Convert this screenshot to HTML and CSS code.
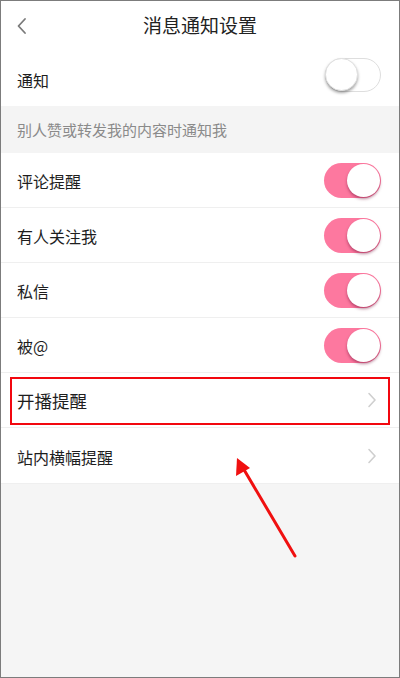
FILE: index.html
```html
<!DOCTYPE html>
<html lang="zh-CN">
<head>
<meta charset="utf-8">
<title>消息通知设置</title>
<link rel="stylesheet" href="styles.css">
</head>
<body>
<div class="frame">
  <header class="header">
    <svg class="back" width="12" height="18" viewBox="0 0 12 18"><path d="M9 2 L2.5 9 L9 16" fill="none" stroke="#7a7a7a" stroke-width="1.8" stroke-linecap="round" stroke-linejoin="round"/></svg>
    <h1 class="title">消息通知设置</h1>
  </header>
  <div class="row row-main">
    <span class="label">通知</span>
    <span class="toggle off"><span class="knob"></span></span>
  </div>
  <div class="section">别人赞或转发我的内容时通知我</div>
  <div class="row">
    <span class="label">评论提醒</span>
    <span class="toggle on"><span class="knob"></span></span>
  </div>
  <div class="row">
    <span class="label">有人关注我</span>
    <span class="toggle on"><span class="knob"></span></span>
  </div>
  <div class="row">
    <span class="label">私信</span>
    <span class="toggle on"><span class="knob"></span></span>
  </div>
  <div class="row">
    <span class="label">被@</span>
    <span class="toggle on"><span class="knob"></span></span>
  </div>
  <div class="row highlighted">
    <span class="label big">开播提醒</span>
    <svg class="chev" width="10" height="16" viewBox="0 0 10 16"><path d="M2 1.5 L8 8 L2 14.5" fill="none" stroke="#cfcfcf" stroke-width="1.6" stroke-linecap="round" stroke-linejoin="round"/></svg>
    <span class="mark"></span>
  </div>
  <div class="row row-last">
    <span class="label">站内横幅提醒</span>
    <svg class="chev" width="10" height="16" viewBox="0 0 10 16"><path d="M2 1.5 L8 8 L2 14.5" fill="none" stroke="#cfcfcf" stroke-width="1.6" stroke-linecap="round" stroke-linejoin="round"/></svg>
  </div>
  <svg class="arrow" width="400" height="678" viewBox="0 0 400 678">
    <line x1="295" y1="556" x2="243" y2="468" stroke="#f01010" stroke-width="3" stroke-linecap="round"/>
    <polygon points="237,458 236,476 250,468" fill="#f01010"/>
  </svg>
</div>
</body>
</html>
```

FILE: styles.css
```css
* { box-sizing: border-box; }
html, body { margin: 0; padding: 0; }
body {
  font-family: "Noto Sans CJK SC", "Noto Sans", sans-serif;
  color: #1e1e1e;
}
.frame {
  position: relative;
  width: 400px;
  height: 678px;
  border: 1px solid #7c7c7c;
  background: #f5f5f5;
  display: flex;
  flex-direction: column;
  overflow: hidden;
}
.header {
  position: relative;
  height: 46px;
  background: #fff;
  display: flex;
  align-items: center;
  justify-content: center;
}
.back {
  position: absolute;
  left: 15px;
  top: 16px;
}
.title {
  margin: 0;
  font-size: 19px;
  font-weight: normal;
  color: #222;
  line-height: 1;
}
.row {
  position: relative;
  height: 55px;
  flex: none;
  background: #fff;
  border-bottom: 1px solid #efefef;
  display: flex;
  align-items: center;
  justify-content: space-between;
  padding: 0 18px 0 16px;
}
.row-main {
  height: 59px;
  border-bottom: none;
}
.row-last { height: 56px; }
.label {
  font-size: 16px;
  line-height: 1;
  padding-top: 2px;
}
.label.big { font-size: 17.5px; }
.row-main .label { padding-top: 6px; }
.section {
  height: 47px;
  flex: none;
  display: flex;
  align-items: center;
  padding: 0 16px;
  font-size: 15px;
  color: #8a8a8a;
  background: #f4f4f4;
}
.toggle {
  position: relative;
  width: 57px;
  height: 35px;
  border-radius: 18px;
  flex: none;
}
.toggle.on { background: #fd789f; }
.toggle.off {
  background: #fff;
  border: 1.5px solid #dedede;
  width: 56px;
  height: 34px;
  margin-top: -4px;
}
.knob {
  position: absolute;
  top: 1px;
  width: 33px;
  height: 33px;
  border-radius: 50%;
  background: #fff;
  box-shadow: 0 2px 3px rgba(0,0,0,0.35);
}
.toggle.on .knob { right: 1px; box-shadow: 0 2px 3px rgba(120,20,60,0.5); }
.toggle.off .knob { left: -1px; top: -1px; border: 1px solid #e0e0e0; }
.chev {
  margin-right: 4px;
  flex: none;
}
.mark {
  position: absolute;
  left: 9px;
  right: 9px;
  top: 4px;
  bottom: 2px;
  border: 2.5px solid #f2070f;
}
.arrow {
  position: absolute;
  left: -1px;
  top: -1px;
  pointer-events: none;
}
```
